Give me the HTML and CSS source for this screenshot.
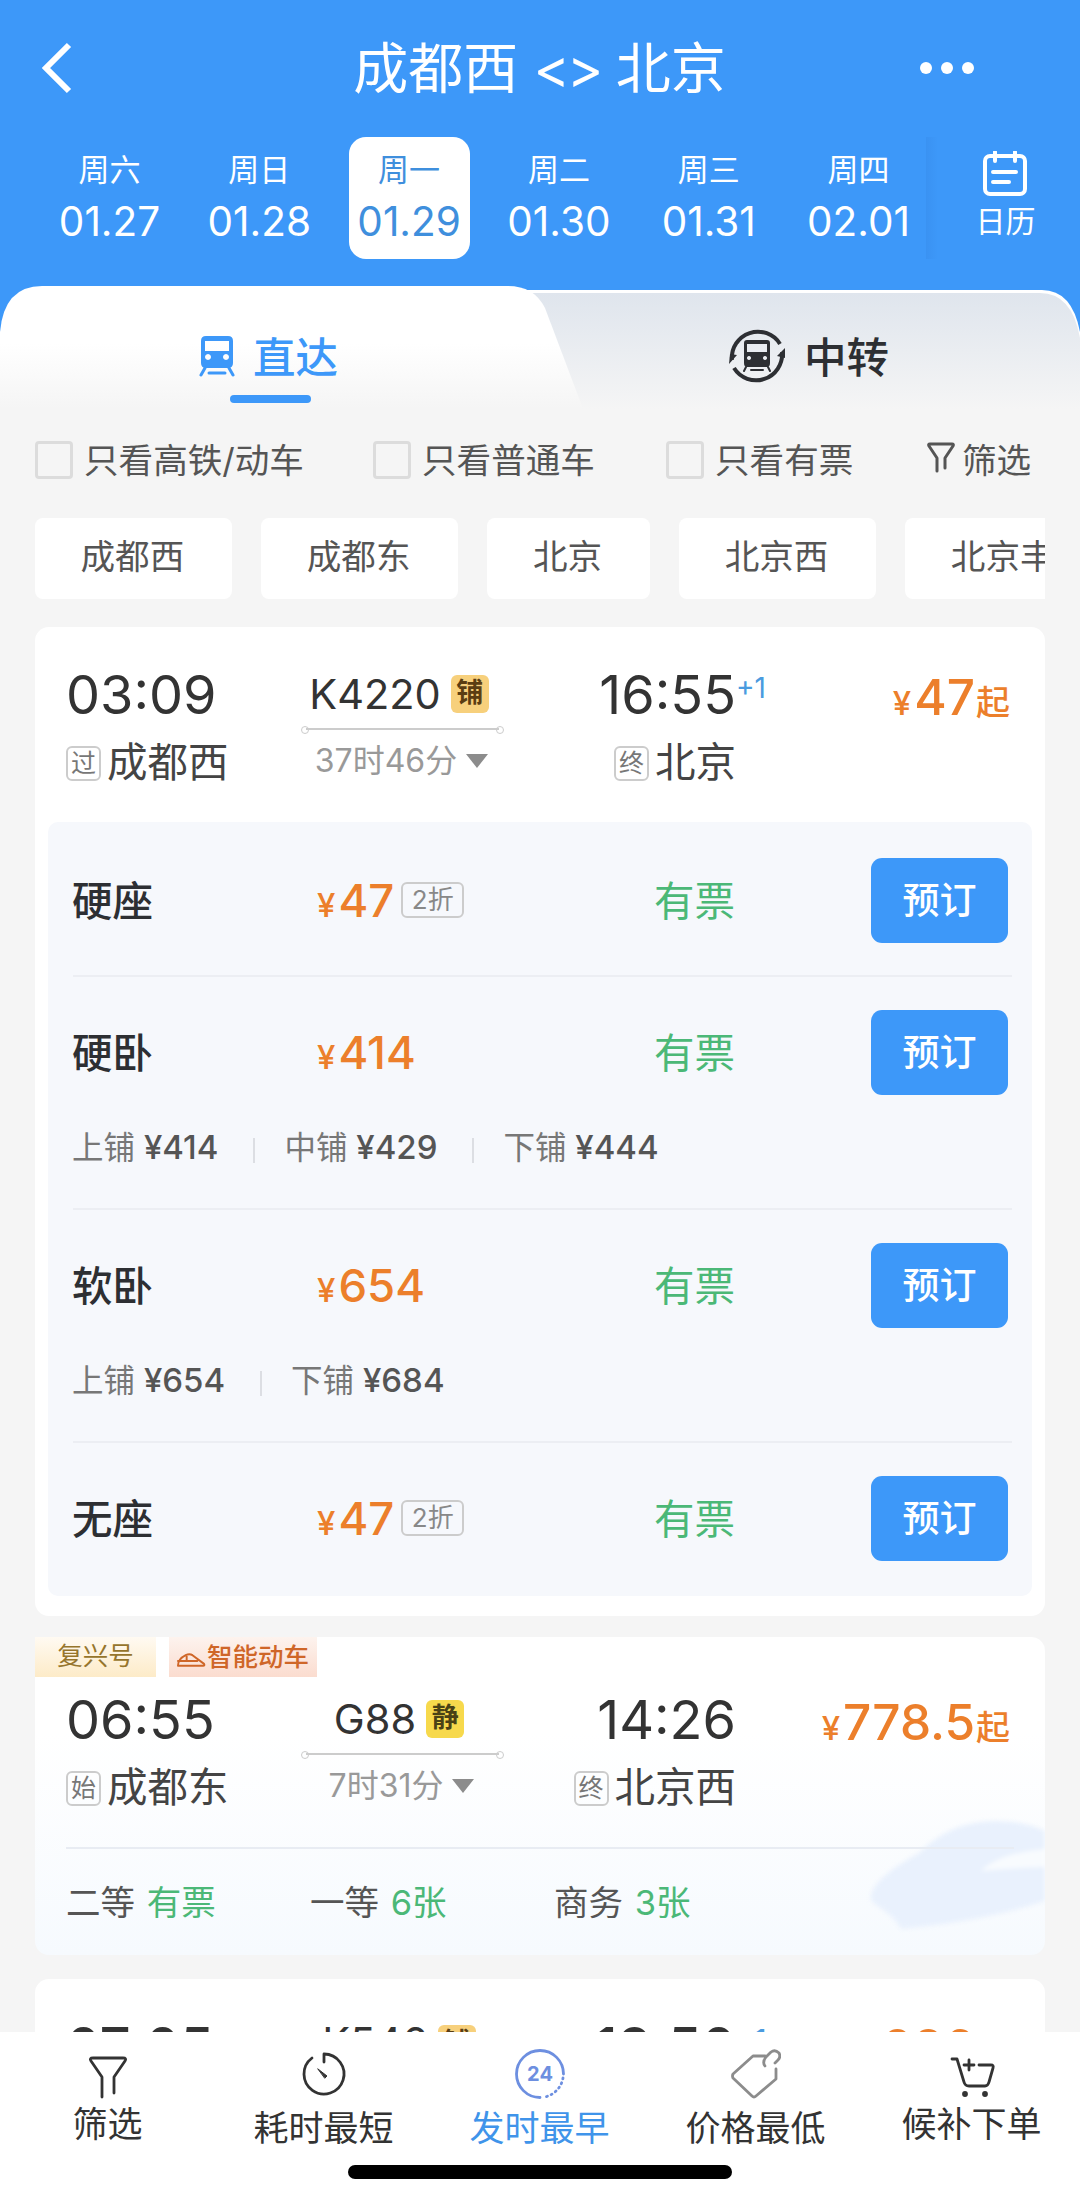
FILE: index.html
```
<!DOCTYPE html>
<html lang="zh-CN">
<head>
  <meta charset="UTF-8">
  <title>成都西 - 北京</title>
  <link rel="stylesheet" href="styles.css">
</head>
<body>

<div class="header">
  <div class="title-bar">
    <svg class="back" viewBox="0 0 34 52"><path d="M30 3 7 26l23 23" /></svg>
    <h1>成都西 <span class="swap">&lt;&gt;</span> 北京</h1>
    <div class="more"><i></i><i></i><i></i></div>
  </div>
  <div class="days">
    <div class="day"><span>周六</span><b>01.27</b></div>
    <div class="day"><span>周日</span><b>01.28</b></div>
    <div class="day active"><span>周一</span><b>01.29</b></div>
    <div class="day"><span>周二</span><b>01.30</b></div>
    <div class="day"><span>周三</span><b>01.31</b></div>
    <div class="day"><span>周四</span><b>02.01</b></div>
    <div class="calendar">
      <svg viewBox="0 0 46 46">
        <rect x="3" y="5" width="40" height="38" rx="5" />
        <path d="M13 1v9M33 1v9M11 21h23M11 31h16" />
      </svg>
      <span>日历</span>
    </div>
  </div>
</div>

<div class="tabs">
  <svg class="tabs-bg" viewBox="0 0 1080 144">
    <defs>
      <linearGradient id="tabOn" x1="0" y1="0" x2="0" y2="1">
        <stop offset="0.4" stop-color="#fff" />
        <stop offset="0.85" stop-color="#f5f5f5" />
      </linearGradient>
      <linearGradient id="tabOff" x1="0" y1="0" x2="0" y2="1">
        <stop offset="0" stop-color="#dfe5ed" />
        <stop offset="0.85" stop-color="#f5f5f5" />
      </linearGradient>
    </defs>
    <path fill="#3d98f9" d="M0 0h1080v60H0z" />
    <path fill="#f5f5f5" d="M0 60h1080v84H0z" />
    <path fill="#fff" d="M480 4h562q30 0 38 42v60H480z" />
    <path fill="url(#tabOff)" d="M480 7h560q32 0 40 45v92H480z" />
    <path fill="url(#tabOn)" d="M0 144V46Q4 0 42 0H508Q534 0 545 22L591 144z" />
  </svg>
  <div class="tab active">
    <svg class="train" viewBox="0 0 36 42">
      <path fill-rule="evenodd" d="M7 1h22q5 0 5 5v22q0 5-5 5H7q-5 0-5-5V6q0-5 5-5zM6 6v10h24V6zM9 19a3 3 0 1 0 .01 0zM27 19a3 3 0 1 0 .01 0z" />
      <path class="rail" d="M6 33l-4 7M30 33l4 7M10 38h16" />
    </svg>
    <span>直达</span>
  </div>
  <div class="tab">
    <svg class="transfer" viewBox="0 0 58 58">
      <path class="ring" d="M4 33A26 26 0 0 1 52 17M54 25A26 26 0 0 1 6 41" />
      <path d="M1 37l8-9-7-1zM57 21l-8 8 8 2z" />
      <path fill-rule="evenodd" d="M19 13h20q3 0 3 3v20q0 4-3 4H19q-3 0-3-4V16q0-3 3-3zM19 17v8h20v-8zM21 29a2 2 0 1 0 .01 0zM37 29a2 2 0 1 0 .01 0z" />
      <path class="rail" d="M18 40l-2 4M40 40l2 4M23 43h12" />
    </svg>
    <span>中转</span>
  </div>
</div>

<div class="filters">
  <label class="w1"><i></i><span>只看高铁/动车</span></label>
  <label class="w2"><i></i><span>只看普通车</span></label>
  <label class="w3"><i></i><span>只看有票</span></label>
  <div class="filter-more">
    <svg viewBox="0 0 28 32"><path d="M10 29V16L2 4Q1 2 3 2H25Q27 2 26 4L18 16V26" /></svg>
    <span>筛选</span>
  </div>
</div>

<div class="stations">
  <div>成都西</div>
  <div>成都东</div>
  <div>北京</div>
  <div>北京西</div>
  <div>北京丰台</div>
</div>

<div class="list">

  <div class="card">
    <div class="trip">
      <div class="from">
        <div class="time">03:09</div>
        <div class="station"><i>过</i>成都西</div>
      </div>
      <div class="train-no">
        <div class="code">K4220<i class="berth">铺</i></div>
        <div class="line"></div>
        <div class="duration">37时46分<i></i></div>
      </div>
      <div class="to">
        <div class="time">16:55<sup>+1</sup></div>
        <div class="station"><i>终</i>北京</div>
      </div>
      <div class="price"><small>¥</small>47<em>起</em></div>
    </div>
    <div class="seats">
      <div class="seat">
        <div class="seat-row">
          <div class="seat-name">硬座</div>
          <div class="seat-price"><small>¥</small>47<i>2折</i></div>
          <div class="seat-left">有票</div>
          <button>预订</button>
        </div>
      </div>
      <div class="seat">
        <div class="seat-row">
          <div class="seat-name">硬卧</div>
          <div class="seat-price"><small>¥</small>414</div>
          <div class="seat-left">有票</div>
          <button>预订</button>
        </div>
        <div class="berths">
          <div>上铺 <b>¥414</b></div>
          <div>中铺 <b>¥429</b></div>
          <div>下铺 <b>¥444</b></div>
        </div>
      </div>
      <div class="seat">
        <div class="seat-row">
          <div class="seat-name">软卧</div>
          <div class="seat-price"><small>¥</small>654</div>
          <div class="seat-left">有票</div>
          <button>预订</button>
        </div>
        <div class="berths">
          <div>上铺 <b>¥654</b></div>
          <div>下铺 <b>¥684</b></div>
        </div>
      </div>
      <div class="seat">
        <div class="seat-row">
          <div class="seat-name">无座</div>
          <div class="seat-price"><small>¥</small>47<i>2折</i></div>
          <div class="seat-left">有票</div>
          <button>预订</button>
        </div>
      </div>
    </div>
  </div>

  <div class="card fuxing">
    <svg class="fuxing-bg" viewBox="0 0 180 124">
      <path fill="#e9f1fd" d="M6 82Q10 64 54 40Q86 8 130 8Q160 8 180 18V88Q120 108 36 116Q30 104 14 94Q4 88 6 82z" />
      <path fill="#f8fbfe" d="M116 58Q134 40 180 36V54Q150 55 116 58z" />
    </svg>
    <div class="tags">
      <div class="tag">复兴号</div>
      <div class="tag smart">
        <svg viewBox="0 0 30 16"><path d="M1 14Q1 7 9 3Q13 1 16 3L28 12Q29 14 27 14zM1 9H21M10 3V9" /></svg>智能动车
      </div>
    </div>
    <div class="trip">
      <div class="from">
        <div class="time">06:55</div>
        <div class="station"><i>始</i>成都东</div>
      </div>
      <div class="train-no">
        <div class="code">G88<i class="quiet">静</i></div>
        <div class="line"></div>
        <div class="duration">7时31分<i></i></div>
      </div>
      <div class="to">
        <div class="time">14:26</div>
        <div class="station"><i>终</i>北京西</div>
      </div>
      <div class="price"><small>¥</small>778.5<em>起</em></div>
    </div>
    <div class="remain">
      <div>二等 <b>有票</b></div>
      <div>一等 <b>6张</b></div>
      <div>商务 <b>3张</b></div>
    </div>
  </div>

  <div class="card next">
    <div class="trip">
      <div class="from">
        <div class="time">07:05</div>
      </div>
      <div class="train-no">
        <div class="code">K546<i class="berth">铺</i></div>
      </div>
      <div class="to">
        <div class="time">18:50<sup>+1</sup></div>
      </div>
      <div class="price"><small>¥</small>286<em>起</em></div>
    </div>
  </div>

</div>

<div class="bottom">
  <div class="sorts">
    <div class="sort">
      <svg viewBox="0 0 50 50"><path d="M19 48V28L8 12Q6 9 10 9H40Q44 9 42 12L31 28V44" /></svg>
      <span>筛选</span>
    </div>
    <div class="sort low">
      <svg viewBox="0 0 50 50">
        <path d="M13 9A20 20 0 1 0 25 5V13" />
        <path fill="#333" stroke-width="1" d="M19 20L28 27 26 29z" />
      </svg>
      <span>耗时最短</span>
    </div>
    <div class="sort low active">
      <svg viewBox="0 0 50 50">
        <path d="M48.5 25A23.5 23.5 0 1 0 25 48.5" />
        <path class="dots" d="M48 29A23.5 23.5 0 0 1 28 48.3" />
        <text x="25" y="32">24</text>
      </svg>
      <span>发时最早</span>
    </div>
    <div class="sort low">
      <svg class="tag-icon" viewBox="0 0 50 50"><path d="M34 7H22L2 25Q1 27 2 29L21 47Q23 49 25 47L45 30V20M34 17Q31 13 35 8L40 3Q44 0 48 4Q50 8 47 11L44 14" /></svg>
      <span>价格最低</span>
    </div>
    <div class="sort">
      <svg viewBox="0 0 50 50">
        <path d="M5 10H10L17 33Q18 37 22 37H38Q41 37 42 33L46 19Q47 16 44 16H32M22 11V21M17 16H27" />
        <circle cx="18" cy="45" r="1.5" /><circle cx="38" cy="45" r="1.5" />
      </svg>
      <span>候补下单</span>
    </div>
  </div>
  <div class="home-bar"></div>
</div>

</body>
</html>
```
FILE: styles.css
```
* {
  box-sizing: border-box;
}

body {
  display: flex;
  flex-direction: column;
  height: 2201px;
  margin: 0;
  overflow: hidden;
  background-color: #f5f5f5;
  color: #333;
  font-family: Inter, "Noto Sans CJK SC", sans-serif;
}

i, em {
  font-style: normal;
}

svg {
  flex: none;
  fill: none;
  stroke: currentColor;
  stroke-linecap: round;
  stroke-linejoin: round;
}

/* header */
.header {
  flex: none;
  height: 286px;
  background-color: #3d98f9;
  color: white;
}

.title-bar {
  display: flex;
  justify-content: space-between;
  align-items: center;
  height: 136px;
  margin-bottom: 1px;
  padding: 0 106px 0 39px;
}

.back {
  width: 34px;
  height: 52px;
  stroke-width: 6;
  stroke-linecap: butt;
  stroke-linejoin: miter;
}

h1 {
  margin: 0 0 0 86px;
  font-size: 55px;
  font-weight: 400;
  line-height: 80px;
}

.swap {
  letter-spacing: -3px;
}

.more {
  display: flex;
  gap: 9px;
}
.more i {
  width: 12px;
  height: 12px;
  border-radius: 50%;
  background-color: white;
}

.days {
  display: flex;
  padding-left: 49px;
}

.day {
  display: flex;
  flex-direction: column;
  align-items: center;
  gap: 8px;
  width: 121px;
  height: 122px;
  margin-right: 28.8px;
  padding-top: 13px;
  border-radius: 17px;
}
.day.active {
  background-color: white;
  color: #3f8fdd;
}
.day span {
  font-size: 31px;
  line-height: 40px;
}
.day b {
  font-size: 40.5px;
  font-weight: 400;
  line-height: 48px;
  white-space: nowrap;
}

.calendar {
  display: flex;
  flex-direction: column;
  align-items: center;
  flex: 1;
  margin-left: -22px;
  padding: 14px 0 0 5px;
  background: linear-gradient(90deg, #3a92f2 0, #3d98f9 12px);
  font-size: 30px;
  line-height: 40px;
}
.calendar svg {
  width: 46px;
  height: 46px;
  margin-bottom: 4px;
  stroke-width: 4;
}

/* direct / transfer tabs */
.tabs {
  position: relative;
  display: flex;
  flex: none;
  height: 144px;
}

.tabs-bg {
  position: absolute;
  width: 1080px;
  height: 144px;
  stroke: none;
}

.tab {
  position: relative;
  display: flex;
  align-items: center;
  gap: 18px;
  height: 140px;
  color: #2d2f33;
  font-size: 42.5px;
  font-weight: 500;
}
.tab.active {
  width: 540px;
  padding-left: 199px;
  color: #3d98f9;
}
.tab + .tab {
  padding-left: 188px;
}
.tab span {
  padding-bottom: 4px;
}
.tab.active::after {
  content: "";
  position: absolute;
  left: 230px;
  bottom: 23px;
  width: 81px;
  height: 8px;
  border-radius: 4px;
  background-color: #3d98f9;
}
.tab svg {
  fill: currentColor;
  stroke: none;
}
.train {
  width: 36px;
  height: 42px;
}
.transfer {
  width: 58px;
  height: 58px;
}
.tab .rail,
.tab .ring {
  fill: none;
  stroke: currentColor;
  stroke-width: 3;
}
.tab .transfer .rail {
  stroke-width: 2;
}
.tab .ring {
  stroke-width: 4;
  stroke-linecap: butt;
}

/* filter checkboxes */
.filters {
  display: flex;
  align-items: center;
  flex: none;
  height: 60px;
  padding-left: 35px;
  color: #555;
  font-size: 34.6px;
  white-space: nowrap;
}
.filters span {
  padding-bottom: 4px;
}
.filters label {
  display: flex;
  align-items: center;
  gap: 11px;
}
.filters label i {
  width: 38px;
  height: 38px;
  border: 3px solid #dcdcdc;
  border-radius: 4px;
}
.filters .w1 { width: 338px; }
.filters .w2 { width: 293px; }
.filters .w3 { width: 261px; }

.filter-more {
  display: flex;
  align-items: center;
  gap: 7px;
}
.filter-more svg {
  width: 28px;
  height: 32px;
  margin-bottom: 4px;
  stroke-width: 3;
}

.stations {
  display: flex;
  flex: none;
  gap: 29.5px;
  margin: 28px 35px 0;
  overflow: hidden;
}
.stations div {
  flex: none;
  height: 81px;
  padding: 0 47.5px 0 45.5px;
  border-radius: 8px;
  background-color: white;
  color: #555;
  font-size: 34.6px;
  line-height: 77px;
}

/* train cards */
.list {
  display: flex;
  flex-direction: column;
  flex: 1;
  gap: 21px;
  min-height: 0;
  padding: 28px 35px 0;
  overflow: hidden;
}

.card {
  position: relative;
  flex: none;
  padding-bottom: 20px;
  border-radius: 14px;
  background-color: white;
}

.trip {
  display: flex;
  height: 195px;
  padding: 38px 35px 0 31px;
}

.from {
  width: 236px;
}
.to {
  width: 233px;
  text-align: right;
}

.time {
  position: relative;
  font-size: 54px;
  line-height: 60px;
}
.time sup {
  position: absolute;
  left: 100%;
  top: 3px;
  color: #4a9bdf;
  font-size: 28px;
  line-height: 40px;
}

.station {
  display: flex;
  align-items: center;
  gap: 6px;
  margin-top: 16px;
  color: #444;
  font-size: 40.5px;
  line-height: 44px;
}
.to .station {
  justify-content: flex-end;
}
.station i {
  width: 35px;
  height: 35px;
  border: 2px solid #ccc;
  border-radius: 6px;
  color: #777;
  font-size: 25px;
  line-height: 30px;
  text-align: center;
}

.train-no {
  display: flex;
  flex-direction: column;
  align-items: center;
  width: 201px;
  padding-top: 7px;
}
.code {
  display: flex;
  align-items: center;
  gap: 10px;
  margin-right: 7px;
  font-size: 41.5px;
  line-height: 44px;
}
.code i {
  width: 38px;
  height: 38px;
  border-radius: 6px;
  background-color: #f7d07c;
  color: #5b3d12;
  font-size: 27px;
  font-weight: 700;
  line-height: 36px;
  text-align: center;
}
.code .quiet {
  background-color: #f7d94c;
  color: #4a4216;
}
.line {
  position: relative;
  width: 193px;
  height: 2px;
  margin: 12px 0 11px;
  background-color: #ccc;
}
.line::before,
.line::after {
  content: "";
  position: absolute;
  top: -2px;
  left: -5px;
  width: 6px;
  height: 6px;
  border: 1px solid #ccc;
  border-radius: 50%;
}
.line::after {
  left: auto;
  right: -5px;
}
.duration {
  display: flex;
  align-items: center;
  gap: 9px;
  margin-right: 2px;
  color: #999;
  font-size: 32px;
  line-height: 40px;
}
.duration i {
  border: 11px solid transparent;
  border-top: 14px solid #8c8c8c;
  border-bottom: none;
}

.price {
  flex: 1;
  padding-top: 2px;
  color: #ec7f2b;
  font-size: 49.5px;
  font-weight: 500;
  line-height: 60px;
  text-align: right;
  white-space: nowrap;
}
.price small,
.seat-price small {
  margin-right: 3px;
  font-size: 33px;
}
.price em {
  margin-left: 1px;
  font-size: 34px;
}

/* seats of the opened train */
.seats {
  margin: 0 13px;
  padding: 2px 20px 3px 25px;
  border-radius: 10px;
  background-color: #f6f8fc;
}
.seat {
  padding: 33px 0 32px;
  border-top: 2px solid #eceef3;
}
.seat:first-child {
  border-color: transparent;
  border-top-width: 1px;
}
.seat-row {
  display: flex;
  align-items: center;
  height: 85px;
}
.seat-name {
  width: 245px;
  margin-left: -1px;
  padding-bottom: 5px;
  color: #2d2f33;
  font-size: 40.5px;
  font-weight: 500;
}
.seat-price {
  display: flex;
  align-items: baseline;
  width: 337px;
  padding-bottom: 1px;
  color: #ec7f2b;
  font-size: 45.5px;
  font-weight: 500;
}
.seat-price i {
  align-self: center;
  width: 63px;
  height: 36px;
  margin-left: 7px;
  border: 2px solid #ccc;
  border-radius: 6px;
  color: #888;
  font-size: 26px;
  font-weight: 400;
  line-height: 31px;
  text-align: center;
}
.seat-left {
  flex: 1;
  padding-bottom: 5px;
  color: #4bb877;
  font-size: 40.5px;
}
.seat button {
  width: 137px;
  height: 85px;
  margin-right: 4px;
  padding: 0 0 5px;
  border: none;
  border-radius: 11px;
  background-color: #3d98f9;
  color: white;
  font-family: inherit;
  font-size: 37px;
  font-weight: 500;
}

.berths {
  display: flex;
  height: 48px;
  margin-top: 33px;
  margin-left: -1px;
  color: #777;
  font-size: 31.5px;
  line-height: 39px;
}
.berths div + div {
  margin-left: 35px;
  padding-left: 31px;
  background: linear-gradient(#dcdee3, #dcdee3) 0 10px / 2px 25px no-repeat;
}
.berths b {
  color: #555;
  font-size: 33px;
  font-weight: 500;
}

/* high-speed card */
.fuxing {
  height: 318px;
  margin-bottom: 3px;
  overflow: hidden;
  border-top-left-radius: 0;
  background: linear-gradient(#fff 30%, #f6fafe);
}
.fuxing-bg {
  position: absolute;
  right: 0;
  bottom: 18px;
  width: 180px;
  height: 124px;
  stroke: none;
  filter: blur(2px);
}
.tags {
  display: flex;
  gap: 13px;
  height: 40px;
}
.tag {
  width: 121px;
  background: linear-gradient(#fffaf2, #fdebc8);
  color: #96752c;
  font-size: 25.5px;
  line-height: 38px;
  text-align: center;
}
.tag.smart {
  display: flex;
  align-items: center;
  width: 148px;
  padding-left: 8px;
  background: linear-gradient(#fdf3ee, #fbdccf);
  color: #cf6628;
  font-weight: 500;
}
.tag.smart svg {
  width: 29px;
  height: 16px;
  margin: 6px 1px 0 0;
  stroke-width: 2;
}
.fuxing .trip {
  position: relative;
  height: 170px;
  padding-top: 13px;
}
.remain {
  position: relative;
  display: flex;
  margin: 0 31px;
  padding-top: 30px;
  border-top: 2px solid #e8ecf3;
  color: #555;
  font-size: 34.5px;
  line-height: 48px;
}
.remain div {
  width: 244px;
  word-spacing: 2px;
}
.remain b {
  color: #4bb877;
  font-weight: 400;
}

/* the next card runs under the bottom bar */
.next .time {
  font-weight: 500;
}
.next .train-no {
  padding-top: 3px;
}
.next .code i {
  margin-top: 4px;
}
.next .price {
  padding-top: 0;
}

/* bottom bar */
.bottom {
  flex: none;
  height: 169px;
  background-color: white;
}
.sorts {
  display: grid;
  grid-template-columns: repeat(5, 1fr);
  height: 133px;
  padding-top: 17px;
}
.sort {
  display: flex;
  flex-direction: column;
  align-items: center;
  color: #333;
  font-size: 35px;
  line-height: 48px;
}
.sort svg {
  width: 50px;
  height: 50px;
  stroke-width: 2.8;
}
.sort span {
  margin-left: -1px;
  padding-top: 1px;
}
.sort.low span {
  padding-top: 5px;
}
.sort circle {
  fill: currentColor;
}
.sort .dots {
  stroke-dasharray: 1 4;
}
.sort.active {
  color: #3f94ea;
}
.sort.active svg {
  color: #6d8fe0;
}
.sort text {
  fill: currentColor;
  stroke: none;
  font-size: 20px;
  font-weight: 700;
  text-anchor: middle;
}
.sort .tag-icon {
  color: #8c8c8c;
}
.home-bar {
  width: 384px;
  height: 14px;
  margin: 0 auto;
  border-radius: 7px;
  background-color: black;
}
```
